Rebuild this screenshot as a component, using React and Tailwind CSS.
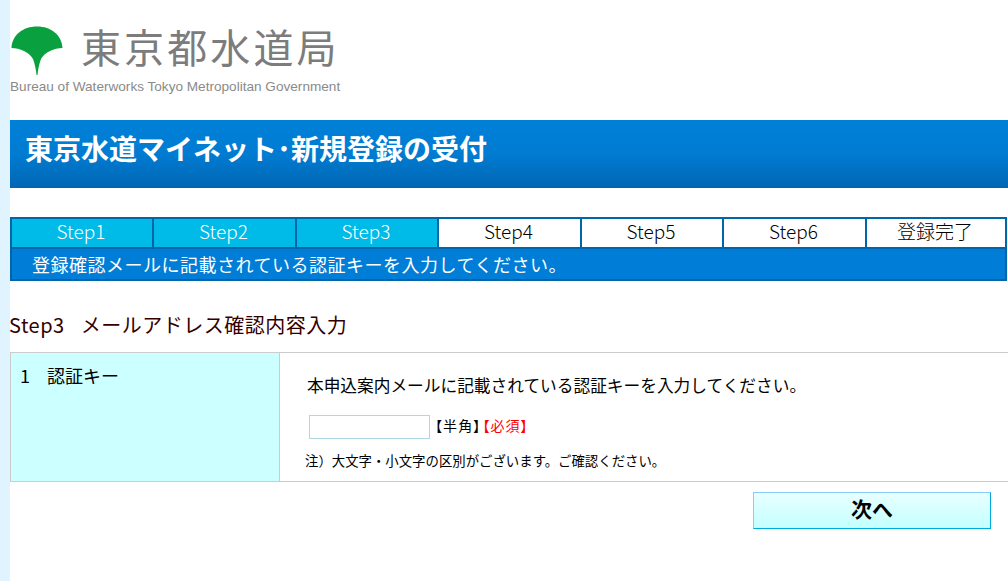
const STEPS = [
  { label: 'Step1', done: true },
  { label: 'Step2', done: true },
  { label: 'Step3', done: true },
  { label: 'Step4' },
  { label: 'Step5' },
  { label: 'Step6' },
  { label: '登録完了' }
]

const FONT = "font-['Noto_Sans_CJK_JP','Noto_Sans',sans-serif]"

function Logo() {
  return (
    <div className="h-[120px] pl-px pt-[17px]">
      <div className="flex h-[42px] items-start">
        <svg width="52" height="50" viewBox="0 0 52 50" className="mt-[9px] shrink-0">
          <path
            d="M0.5 22 C1 9 12 0.5 26 0.5 C40 0.5 51 9 51.5 22 C43 22 34 26 30 33 C28 38 27 44 26.5 49 L25.5 49 C25 44 24 38 22 33 C18 26 9 22 0.5 22 Z"
            fill="#09a13f"
          />
        </svg>
        <span className="mt-[8px] ml-[18px] text-[40px] leading-[42px] font-normal tracking-[3.1px] whitespace-nowrap text-[#7c7c7c]">
          東京都水道局
        </span>
      </div>
      <p className="mt-[20px] -ml-px font-['Liberation_Sans',sans-serif] text-[13.6px] leading-4 whitespace-nowrap text-[#8a8a8a]">
        Bureau of Waterworks Tokyo Metropolitan Government
      </p>
    </div>
  )
}

function StepBar() {
  return (
    <div className="mt-[29px] mr-px grid grid-cols-[140px_141px_140px_141px_140px_141px_138px] gap-[2px] bg-[#0066aa] p-[2px]">
      {STEPS.map((step) => (
        <div
          key={step.label}
          className={`flex h-7 items-center justify-center pr-[2px] pb-[3px] text-[19px] font-light ${
            step.done ? 'bg-[#00bbe8] text-white' : 'bg-white text-black'
          }`}
        >
          {step.label}
        </div>
      ))}
      <div className="col-span-7 flex h-[30px] items-center bg-[#007dd6] pl-5 text-[18px] tracking-[0.5px] text-white">
        登録確認メールに記載されている認証キーを入力してください。
      </div>
    </div>
  )
}

export default function App() {
  return (
    <div className={`flex h-[581px] overflow-hidden bg-white ${FONT}`}>
      <div className="w-[10px] shrink-0 bg-[#e0f4ff]" />
      <div className="min-w-0 flex-1">
        <Logo />

        <div className="flex h-[68px] items-center bg-gradient-to-b from-[#0080d8] via-[#007cd2] to-[#0066b3] pb-3 pl-[15px]">
          <h1 className="text-[28px] leading-none font-bold whitespace-nowrap text-white">
            東京水道マイネット･新規登録の受付
          </h1>
        </div>

        <StepBar />

        <h2 className="mt-[32px] -ml-px flex h-[39px] text-[20px] leading-6 tracking-[0.5px] text-[#330000]">
          Step3
          <span className="ml-4">メールアドレス確認内容入力</span>
        </h2>

        <div className="flex h-[130px] border-y border-[#cccccc] text-black">
          <div className="flex w-[270px] shrink-0 border-x border-[#cccccc] bg-[#ccffff] pt-[10px] pl-[9px] text-[18px] leading-6">
            1<span className="ml-[17px]">認証キー</span>
          </div>
          <div className="min-w-0 flex-1 pl-[27px]">
            <p className="mt-[20px] text-[16.7px] leading-6 whitespace-nowrap">
              本申込案内メールに記載されている認証キーを入力してください。
            </p>
            <div className="mt-[18px] ml-[2px] flex items-center">
              <input type="text" className="h-6 w-[121px] border border-[#add8e6] bg-white" />
              <span className="ml-[5px] pb-[3px] text-[14px] tracking-[1.1px] [font-feature-settings:'palt']">【半角】</span>
              <span className="ml-[1px] pb-[3px] text-[14px] tracking-[1.1px] text-[#ff0000] [font-feature-settings:'palt']">【必須】</span>
            </div>
            <p className="mt-[11px] -ml-[2px] text-[13.4px] leading-5 whitespace-nowrap">
              注）大文字・小文字の区別がございます。ご確認ください。
            </p>
          </div>
        </div>

        <div className="mt-[10px] flex justify-end pr-[17px]">
          <button
            type="button"
            className="h-[37px] w-[238px] border border-t-[#88ccff] border-r-[#00aadd] border-b-[#00aadd] border-l-[#88ccff] bg-gradient-to-b from-[#e8ffff] to-[#c4ffff] pb-1 text-[21px] font-bold text-black"
          >
            次へ
          </button>
        </div>
      </div>
    </div>
  )
}
